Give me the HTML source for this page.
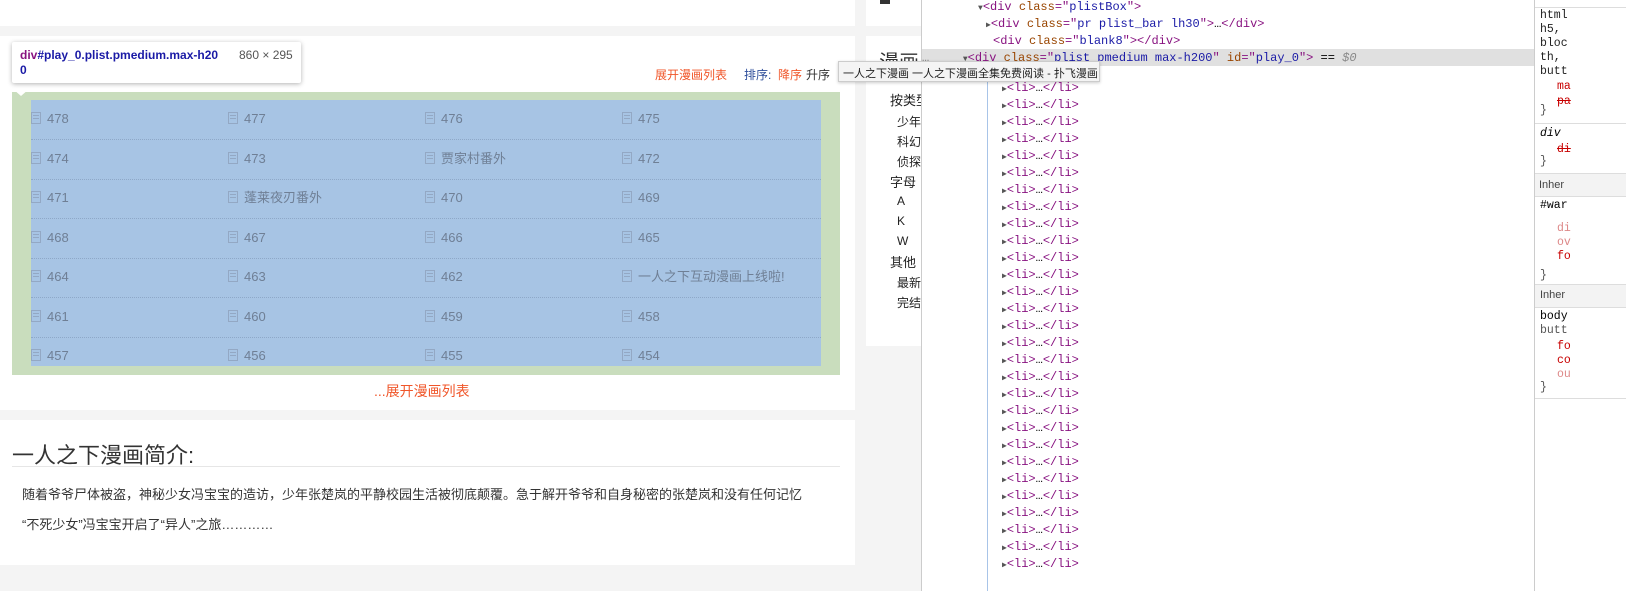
<!DOCTYPE html>
<html><head><meta charset="utf-8"><style>
*{margin:0;padding:0;box-sizing:border-box}
body{width:1626px;height:591px;overflow:hidden;background:#f4f4f4;position:relative;font-family:"Liberation Sans","Noto Sans CJK SC",sans-serif}
.a{position:absolute}
.w{background:#fff}
.cell{position:absolute;font-size:13px;color:#6f7f95;line-height:16px}
.ic{display:inline-block;width:10px;height:12px;border:1px solid #93a8c4;margin-right:6px;vertical-align:-1px;background:repeating-linear-gradient(#a6c4e4 0 2px,#93a8c4 2px 3px);background-clip:content-box;padding:2px 1px}
.dl{position:absolute;left:31px;width:790px;border-top:1px dotted #8ea8c8}
.dt{font-family:"Liberation Mono",monospace;font-size:12px;position:absolute;white-space:pre;line-height:14px}
.t{color:#881280}.n{color:#994500}.v{color:#1a1aa6}.g{color:#888}
.tri{color:#555;font-size:8px}
.sb{font-size:12px;color:#222;position:absolute}
.st{font-family:"Liberation Mono",monospace;font-size:11.5px;position:absolute;white-space:pre;line-height:14px}
</style></head><body>
<div class="a w" style="left:0;top:0;width:855px;height:26px"></div>
<div class="a w" style="left:0;top:36px;width:855px;height:374px"></div>
<div class="a w" style="left:0;top:420px;width:855px;height:145px"></div>
<div class="a w" style="left:866px;top:0;width:60px;height:26px"></div>
<div class="a w" style="left:866px;top:36px;width:60px;height:310px"></div>
<div class="a" style="left:880px;top:0;width:10px;height:4px;background:#333"></div>

<div class="a" style="left:655px;top:66px;font-size:12px;color:#f0562a">展开漫画列表</div>
<div class="a" style="left:744px;top:66px;font-size:12px;color:#2d4d9a">排序:</div>
<div class="a" style="left:778px;top:66px;font-size:12px;color:#f0562a">降序</div>
<div class="a" style="left:806px;top:66px;font-size:12px;color:#333">升序</div>

<div class="a" style="left:12px;top:92px;width:828px;height:283px;background:#c9ddbd"></div>
<div class="a" style="left:31px;top:100px;width:790px;height:266px;background:#a7c4e4"></div>
<div class="dl" style="top:139px"></div><div class="dl" style="top:179px"></div><div class="dl" style="top:218px"></div><div class="dl" style="top:258px"></div><div class="dl" style="top:297px"></div><div class="dl" style="top:337px"></div>

<div class="cell" style="left:31px;top:111px"><span class="ic"></span>478</div><div class="cell" style="left:228px;top:111px"><span class="ic"></span>477</div><div class="cell" style="left:425px;top:111px"><span class="ic"></span>476</div><div class="cell" style="left:622px;top:111px"><span class="ic"></span>475</div>
<div class="cell" style="left:31px;top:151px"><span class="ic"></span>474</div><div class="cell" style="left:228px;top:151px"><span class="ic"></span>473</div><div class="cell" style="left:425px;top:151px"><span class="ic"></span>贾家村番外</div><div class="cell" style="left:622px;top:151px"><span class="ic"></span>472</div>
<div class="cell" style="left:31px;top:190px"><span class="ic"></span>471</div><div class="cell" style="left:228px;top:190px"><span class="ic"></span>蓬莱夜刃番外</div><div class="cell" style="left:425px;top:190px"><span class="ic"></span>470</div><div class="cell" style="left:622px;top:190px"><span class="ic"></span>469</div>
<div class="cell" style="left:31px;top:230px"><span class="ic"></span>468</div><div class="cell" style="left:228px;top:230px"><span class="ic"></span>467</div><div class="cell" style="left:425px;top:230px"><span class="ic"></span>466</div><div class="cell" style="left:622px;top:230px"><span class="ic"></span>465</div>
<div class="cell" style="left:31px;top:269px"><span class="ic"></span>464</div><div class="cell" style="left:228px;top:269px"><span class="ic"></span>463</div><div class="cell" style="left:425px;top:269px"><span class="ic"></span>462</div><div class="cell" style="left:622px;top:269px"><span class="ic"></span>一人之下互动漫画上线啦!</div>
<div class="cell" style="left:31px;top:309px"><span class="ic"></span>461</div><div class="cell" style="left:228px;top:309px"><span class="ic"></span>460</div><div class="cell" style="left:425px;top:309px"><span class="ic"></span>459</div><div class="cell" style="left:622px;top:309px"><span class="ic"></span>458</div>
<div class="cell" style="left:31px;top:348px"><span class="ic"></span>457</div><div class="cell" style="left:228px;top:348px"><span class="ic"></span>456</div><div class="cell" style="left:425px;top:348px"><span class="ic"></span>455</div><div class="cell" style="left:622px;top:348px"><span class="ic"></span>454</div>

<div class="a" style="left:374px;top:381px;font-size:14px;color:#f0562a">...展开漫画列表</div>

<div class="a" style="left:12px;top:438px;font-size:22px;color:#333">一人之下漫画简介:</div>
<div class="a" style="left:12px;top:466px;width:828px;border-top:1px solid #e6e6e6"></div>
<div class="a" style="left:22px;top:484px;font-size:13px;color:#333">随着爷爷尸体被盗，神秘少女冯宝宝的造访，少年张楚岚的平静校园生活被彻底颠覆。急于解开爷爷和自身秘密的张楚岚和没有任何记忆</div>
<div class="a" style="left:22px;top:514px;font-size:13px;color:#333">“不死少女”冯宝宝开启了“异人”之旅…………</div>

<div class="a" style="left:12px;top:42px;width:289px;height:41px;background:#fff;box-shadow:0 1px 5px rgba(0,0,0,.3);border-radius:2px"></div>
<div class="a" style="left:13px;top:89px;width:0;height:0;border-left:8px solid transparent;border-right:8px solid transparent;border-top:7px solid #fff"></div>
<div class="a" style="left:20px;top:48px;font-size:12px;font-weight:bold;color:#1a1aa6;line-height:15px;width:210px"><span style="color:#881280">div</span>#play_0.plist.pmedium.max-h20<br>0</div>
<div class="a" style="left:239px;top:48px;font-size:12px;color:#555">860 × 295</div>

<div class="a" style="left:879px;top:46px;font-size:20px;color:#333">漫画</div>
<div class="sb" style="left:890px;top:90px;font-size:13px">按类型</div>
<div class="sb" style="left:897px;top:113px">少年</div>
<div class="sb" style="left:897px;top:133px">科幻</div>
<div class="sb" style="left:897px;top:153px">侦探</div>
<div class="sb" style="left:890px;top:172px;font-size:13px">字母</div>
<div class="sb" style="left:897px;top:194px">A</div>
<div class="sb" style="left:897px;top:214px">K</div>
<div class="sb" style="left:897px;top:234px">W</div>
<div class="sb" style="left:890px;top:252px;font-size:13px">其他</div>
<div class="sb" style="left:897px;top:274px">最新</div>
<div class="sb" style="left:897px;top:294px">完结</div>

<div class="a" style="left:921px;top:0;width:705px;height:591px;background:#fff;border-left:1px solid #ccc"></div>
<div class="a" style="left:922px;top:49px;width:612px;height:17px;background:#e0e0e0"></div>
<div class="a" style="left:987px;top:80px;height:511px;border-left:1px solid #a8c4e8"></div>
<div class="dt" style="left:978px;top:0"><span class="tri">▼</span><span class="t">&lt;div </span><span class="n">class</span><span class="t">="</span><span class="v">plistBox</span><span class="t">"&gt;</span></div>
<div class="dt" style="left:986px;top:17px"><span class="tri">▶</span><span class="t">&lt;div </span><span class="n">class</span><span class="t">="</span><span class="v">pr plist_bar lh30</span><span class="t">"&gt;</span>…<span class="t">&lt;/div&gt;</span></div>
<div class="dt" style="left:993px;top:34px"><span class="t">&lt;div </span><span class="n">class</span><span class="t">="</span><span class="v">blank8</span><span class="t">"&gt;&lt;/div&gt;</span></div>
<div class="dt" style="left:922px;top:51px"><span class="g">…  </span><span class="tri">    ▼</span><span class="t">&lt;div </span><span class="n">class</span><span class="t">="</span><span class="v">plist pmedium max-h200</span><span class="t">" </span><span class="n">id</span><span class="t">="</span><span class="v">play_0</span><span class="t">"&gt;</span> == <span class="g" style="font-style:italic">$0</span></div>
<div class="a" style="left:838px;top:61px;width:262px;height:21px;background:#f4f4f4;border:1px solid #ccc;box-shadow:0 1px 3px rgba(0,0,0,.2);font-size:11px;color:#222;padding:3px 4px;white-space:nowrap">一人之下漫画 一人之下漫画全集免费阅读 - 扑飞漫画</div>
<div id="lis"></div>
<script>
var h='';for(var i=0;i<29;i++){h+='<div class="dt" style="left:1002px;top:'+(81+i*17)+'px"><span class="tri">▶</span><span class="t">&lt;li&gt;</span>…<span class="t">&lt;/li&gt;</span></div>';}
document.getElementById('lis').innerHTML=h;
</script>
<div class="a" style="left:1534px;top:0;width:92px;height:591px;background:#fff;border-left:1px solid #ccc"></div>
<div class="a" style="left:1535px;top:7px;width:91px;border-top:1px solid #ddd"></div>
<div class="st" style="left:1540px;top:9px;color:#222">html<br>h5,<br>bloc<br>th,<br>butt</div>
<div class="st" style="left:1557px;top:80px;color:#c80000">ma</div>
<div class="st" style="left:1557px;top:95px;color:#c80000;text-decoration:line-through">pa</div>
<div class="st" style="left:1540px;top:104px;color:#555">}</div>
<div class="a" style="left:1535px;top:123px;width:91px;border-top:1px solid #ddd"></div>
<div class="st" style="left:1540px;top:127px;font-style:italic">div</div>
<div class="st" style="left:1557px;top:143px;color:#c80000;text-decoration:line-through">di</div>
<div class="st" style="left:1540px;top:155px;color:#555">}</div>
<div class="a" style="left:1535px;top:173px;width:91px;height:24px;background:#f3f3f3;border-top:1px solid #ddd;border-bottom:1px solid #ddd;font-size:11px;color:#444;padding:5px 4px">Inher</div>
<div class="st" style="left:1540px;top:199px">#war</div>
<div class="st" style="left:1557px;top:222px;color:#d88">di<br>ov</div>
<div class="st" style="left:1557px;top:250px;color:#c80000">fo</div>
<div class="st" style="left:1540px;top:269px;color:#555">}</div>
<div class="a" style="left:1535px;top:284px;width:91px;height:24px;background:#f3f3f3;border-top:1px solid #ddd;border-bottom:1px solid #ddd"></div>
<div class="a" style="left:1540px;top:289px;font-size:11px;color:#444">Inher</div>
<div class="st" style="left:1540px;top:310px">body<br><span style="color:#555">butt</span></div>
<div class="st" style="left:1557px;top:340px;color:#c80000">fo<br>co</div>
<div class="st" style="left:1557px;top:368px;color:#d88">ou</div>
<div class="st" style="left:1540px;top:381px;color:#555">}</div>
<div class="a" style="left:1535px;top:398px;width:91px;border-top:1px solid #ddd"></div>
</body></html>
